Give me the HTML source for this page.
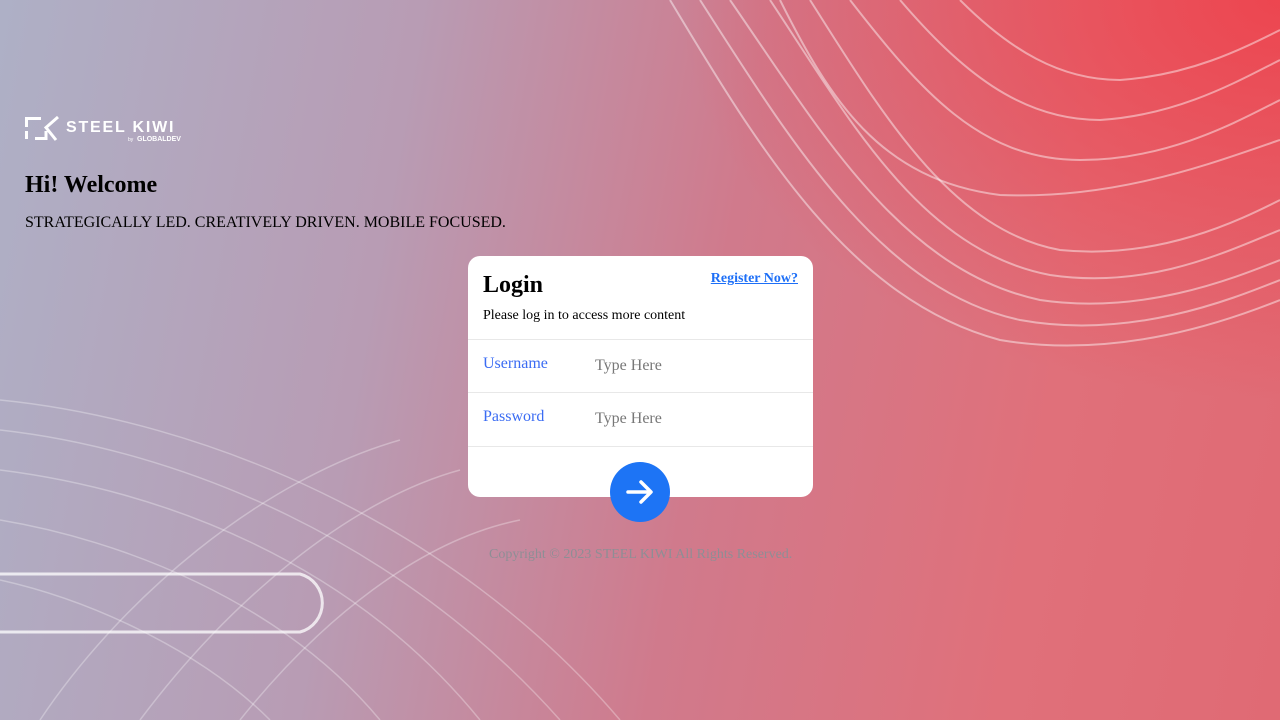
<!DOCTYPE html>
<html><head><meta charset="utf-8"><style>
html,body{margin:0;width:1280px;height:720px;overflow:hidden;font-family:"Liberation Serif",serif}
body{position:relative;background:linear-gradient(100deg,#aeb0c6 0%,#b89cb4 30%,#d07a8c 55%,#e0707a 80%,#e06a74 100%)}
.ov{position:absolute;inset:0;background:radial-gradient(ellipse 600px 400px at 1280px 0px,rgba(240,60,70,.8),rgba(240,60,70,0) 100%)}
svg.bg{position:absolute;left:0;top:0}
.logo{position:absolute;left:25px;top:114px}
h1{position:absolute;left:25px;top:172px;margin:0;font-size:24px;font-weight:bold}
.tag{position:absolute;left:25px;top:214px;font-size:16px}
.card{position:absolute;left:468px;top:256px;width:345px;height:241px;background:#fff;border-radius:12px}
.card h2{position:absolute;left:15px;top:16px;margin:0;font-size:24px}
.reg{position:absolute;right:15px;top:15px;font-size:14px;font-weight:bold;color:#1d6ff7;text-decoration:underline}
.sub{position:absolute;left:15px;top:52px;font-size:14px}
.hr{position:absolute;left:0;right:0;height:1px;background:#e8e8e8}
.lab{position:absolute;left:15px;font-size:16px;color:#3b6cf3}
.ph{position:absolute;left:127px;font-size:16px;color:#777}
.btn{position:absolute;left:610px;top:462px;width:60px;height:60px;border-radius:50%;background:#1d74f5}
.copy{position:absolute;left:489px;top:547px;font-size:14px;color:#8e8e95}
</style></head><body>
<div class="ov"></div>
<svg class="bg" width="1280" height="720" fill="none" stroke="rgba(255,255,255,.45)" stroke-width="2">
<g>
<path d="M670 0 C760 150 850 300 1000 340 C1120 360 1230 320 1280 300"/>
<path d="M700 0 C790 140 880 290 1020 320 C1130 340 1230 300 1280 280"/>
<path d="M730 0 C820 130 900 270 1040 300 C1140 315 1230 280 1280 260"/>
<path d="M770 0 C850 120 920 250 1050 275 C1150 290 1230 250 1280 230"/>
<path d="M810 0 C880 110 950 230 1060 250 C1160 260 1240 220 1280 200"/>
<path d="M780 0 C830 100 880 180 1000 195 C1120 200 1220 160 1280 140"/>
<path d="M850 0 C920 90 980 160 1080 160 C1170 160 1240 120 1280 100"/>
<path d="M900 0 C960 70 1020 120 1100 120 C1180 115 1240 80 1280 60"/>
<path d="M960 0 C1010 50 1060 80 1120 80 C1190 75 1240 50 1280 30"/>
</g>
<g stroke="rgba(255,255,255,.3)" stroke-width="1.5">
<path d="M0 400 C200 420 450 520 620 720"/>
<path d="M0 430 C180 450 400 540 560 720"/>
<path d="M0 470 C160 490 350 560 480 720"/>
<path d="M0 520 C120 540 280 600 380 720"/>
<path d="M0 580 C90 600 200 650 270 720"/>
<path d="M40 720 C120 600 260 480 400 440"/>
<path d="M140 720 C230 600 350 500 460 470"/>
<path d="M240 720 C320 620 420 540 520 520"/>
</g>
<path d="M0 574 H300 A30 30 0 0 1 300 632 H0" stroke="rgba(255,255,255,.75)" stroke-width="3"/>
</svg>
<svg class="logo" width="160" height="28" viewBox="0 0 160 28">
<path d="M1.5 13 V4.5 H16 M10 24.5 H21 V17 M1.5 17 V25 M33 3 L21 13.5 L31 26" stroke="#fff" stroke-width="3" fill="none"/>
<text x="41" y="18" fill="#fff" font-family="Liberation Sans,sans-serif" font-size="16" font-weight="bold" letter-spacing="1.8">STEEL KIWI</text>
<text x="103" y="27" fill="#fff" font-family="Liberation Sans,sans-serif" font-size="5">by</text>
<text x="112" y="27" fill="#fff" font-family="Liberation Sans,sans-serif" font-size="7" font-weight="bold">GLOBALDEV</text>
</svg>
<h1>Hi! Welcome</h1>
<div class="tag">STRATEGICALLY LED. CREATIVELY DRIVEN. MOBILE FOCUSED.</div>
<div class="card">
<h2>Login</h2><div class="reg">Register Now?</div>
<div class="sub">Please log in to access more content</div>
<div class="hr" style="top:83px"></div>
<div class="lab" style="top:99px">Username</div><div class="ph" style="top:101px">Type Here</div>
<div class="hr" style="top:136px"></div>
<div class="lab" style="top:152px">Password</div><div class="ph" style="top:154px">Type Here</div>
<div class="hr" style="top:190px"></div>
</div>
<div class="btn"><svg width="60" height="60"><path d="M18 30 H40 M31 20 L41 30 L31 40" stroke="#fff" stroke-width="3.5" fill="none" stroke-linecap="round" stroke-linejoin="round"/></svg></div>
<div class="copy">Copyright © 2023 STEEL KIWI All Rights Reserved.</div>
</body></html>
